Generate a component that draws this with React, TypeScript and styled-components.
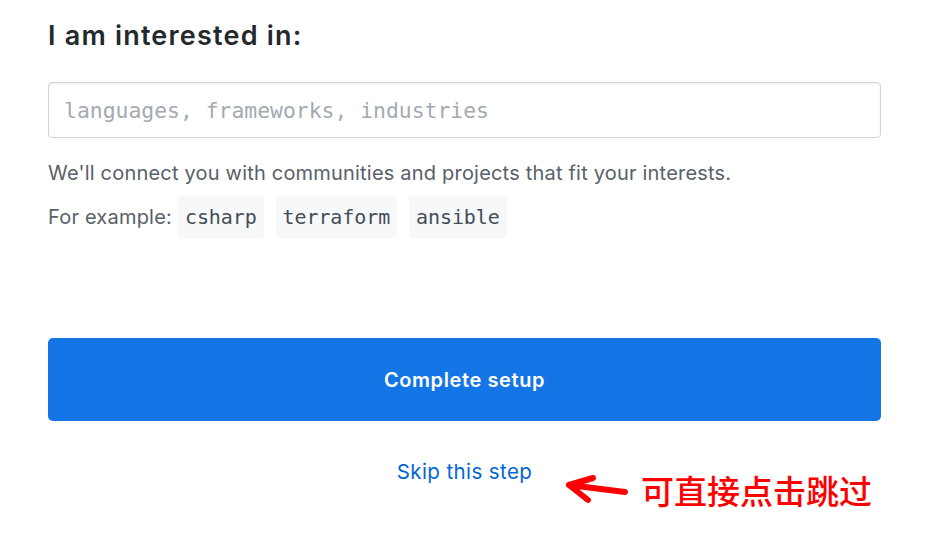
import React from "react";
import styled, { createGlobalStyle } from "styled-components";

const Global = createGlobalStyle`
  html, body { margin: 0; padding: 0; background: #fff; }
  body { font-family: Inter, "Liberation Sans", Arial, sans-serif; -webkit-font-smoothing: antialiased; }
  * { box-sizing: border-box; }
`;

const Page = styled.div`
  width: 935px;
  height: 533px;
  padding: 14px 54px 0 48px;
  display: flex;
  flex-direction: column;
`;

const Heading = styled.h2`
  margin: 0;
  font-size: 27px;
  line-height: 44px;
  letter-spacing: 1.2px;
  font-weight: 600;
  color: #24292e;
`;

const Input = styled.input`
  margin-top: 24px;
  width: 100%;
  height: 56px;
  border: 1px solid #d1d5da;
  border-radius: 4px;
  padding: 0 15px;
  font-family: "DejaVu Sans Mono", monospace;
  font-size: 21.4px;
  color: #24292e;
  outline: none;
  box-shadow: inset 0 1px 2px rgba(27, 31, 35, 0.075);
  &::placeholder { color: #a3aab1; }
`;

const Note = styled.p`
  margin: 22px 0 0;
  font-size: 20px;
  letter-spacing: 0.2px;
  line-height: 26px;
  color: #586069;
`;

const ExampleRow = styled.div`
  margin-top: 10px;
  display: flex;
  align-items: center;
  gap: 12px;
  font-size: 20px;
  letter-spacing: 0.2px;
  color: #586069;
`;

const Label = styled.span`
  margin-right: -6px;
`;

const Tag = styled.span`
  display: inline-flex;
  align-items: center;
  height: 42px;
  padding: 0 7px;
  border-radius: 4px;
  background: #f6f8fa;
  font-family: "DejaVu Sans Mono", monospace;
  font-size: 20px;
  letter-spacing: -0.1px;
  color: #444d56;
`;

const Button = styled.button`
  margin-top: 100px;
  width: 100%;
  height: 83px;
  border: none;
  border-radius: 5px;
  background: #1475e6;
  color: #fff;
  font-family: Inter, "Liberation Sans", Arial, sans-serif;
  font-size: 20px;
  letter-spacing: 0.6px;
  font-weight: 600;
  cursor: pointer;
`;

const SkipRow = styled.div`
  margin-top: 38px;
  position: relative;
  display: flex;
  justify-content: center;
`;

const SkipLink = styled.a`
  font-size: 20.5px;
  letter-spacing: 0.4px;
  color: #0366d6;
  text-decoration: none;
`;

const Annotation = styled.div`
  position: absolute;
  left: 518px;
  top: 11px;
  display: flex;
  align-items: center;
  gap: 13px;
`;

const Callout = styled.span`
  font-family: "Noto Sans CJK SC", sans-serif;
  font-size: 33px;
  font-weight: 500;
  color: #ff0000;
  line-height: 40px;
`;

export default function App() {
  return (
    <>
      <Global />
      <Page>
        <Heading>I am interested in:</Heading>
        <Input placeholder="languages, frameworks, industries" />
        <Note>We'll connect you with communities and projects that fit your interests.</Note>
        <ExampleRow>
          <Label>For example:</Label>
          <Tag>csharp</Tag>
          <Tag>terraform</Tag>
          <Tag>ansible</Tag>
        </ExampleRow>
        <Button>Complete setup</Button>
        <SkipRow>
          <SkipLink href="#">Skip this step</SkipLink>
          <Annotation>
            <svg width="62" height="30" viewBox="0 0 62 30">
              <path
                d="M3 10 L59 17 M3 10 L27 3 M3 10 L22 25"
                stroke="#ff0000"
                strokeWidth="6"
                strokeLinecap="round"
                strokeLinejoin="round"
                fill="none"
              />
            </svg>
            <Callout>可直接点击跳过</Callout>
          </Annotation>
        </SkipRow>
      </Page>
    </>
  );
}
